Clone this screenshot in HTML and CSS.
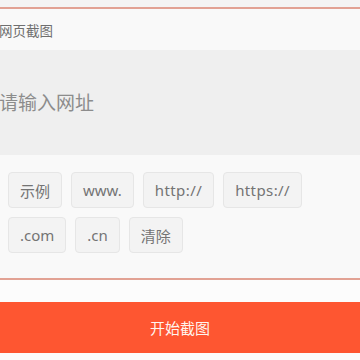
FILE: index.html
```html
<!DOCTYPE html>
<html lang="zh-CN">
<head>
  <meta charset="UTF-8">
  <meta name="viewport" content="width=device-width, initial-scale=1.0">
  <title>网页截图</title>
  <link rel="stylesheet" href="styles.css">
</head>
<body>
  <div class="panel">
    <div class="panel-title">网页截图</div>
    <div class="url-box">
      <input type="text" class="url-input" placeholder="请输入网址">
    </div>
    <div class="chips">
      <button class="chip">示例</button>
      <button class="chip">www.</button>
      <button class="chip latin">http://</button>
      <button class="chip latin">https://</button>
      <button class="chip">.com</button>
      <button class="chip">.cn</button>
      <button class="chip">清除</button>
    </div>
  </div>

  <div class="footer">
    <button class="btn-start">开始截图</button>
  </div>
</body>
</html>
```

FILE: styles.css
```css
:root {
  --accent: #fe5631;
  --line: #e2a294;
  --page-bg: #f9f9f9;
  --box-bg: #efefef;
  --chip-bg: #f3f3f3;
  --chip-border: #e6e6e6;
  --muted: #747474;
}

* {
  margin: 0;
  padding: 0;
  box-sizing: border-box;
  font-family: "Noto Sans", "Noto Sans CJK SC", sans-serif;
}

body {
  width: 360px;
  height: 360px;
  overflow: hidden;
  background-color: #f4f4f4;
}

.panel {
  height: 273px;
  margin-top: 7px;
  border-top: 2px solid var(--line);
  border-bottom: 2px solid var(--line);
  background-color: var(--page-bg);
}

.panel-title {
  height: 41px;
  padding-top: 13px;
  margin-left: -1px;
  font-size: 13.5px;
  line-height: 18px;
  color: #6f6f6f;
}

.url-box {
  height: 105px;
  background-color: var(--box-bg);
  display: flex;
  align-items: center;
}

.url-input {
  width: 100%;
  margin-left: -1px;
  border: none;
  outline: none;
  background: transparent;
  font-size: 19px;
  color: #333;
}

.url-input::placeholder {
  color: #8c8c8c;
}

.chips {
  display: flex;
  flex-wrap: wrap;
  gap: 9px;
  padding: 17px 8px 0;
}

.chip {
  height: 36px;
  padding: 0 11px;
  border: 1px solid var(--chip-border);
  border-radius: 4px;
  background-color: var(--chip-bg);
  font-size: 15px;
  color: var(--muted);
  cursor: pointer;
}

/* slashes render narrower than in the original font */
.chip.latin {
  letter-spacing: 0.4px;
}

.footer {
  height: 80px;
  padding-top: 22px;
  background-color: #fcfcfc;
}

.btn-start {
  display: block;
  width: 100%;
  height: 51px;
  border: none;
  background-color: var(--accent);
  color: #fff4ee;
  font-size: 15px;
  cursor: pointer;
}
```
